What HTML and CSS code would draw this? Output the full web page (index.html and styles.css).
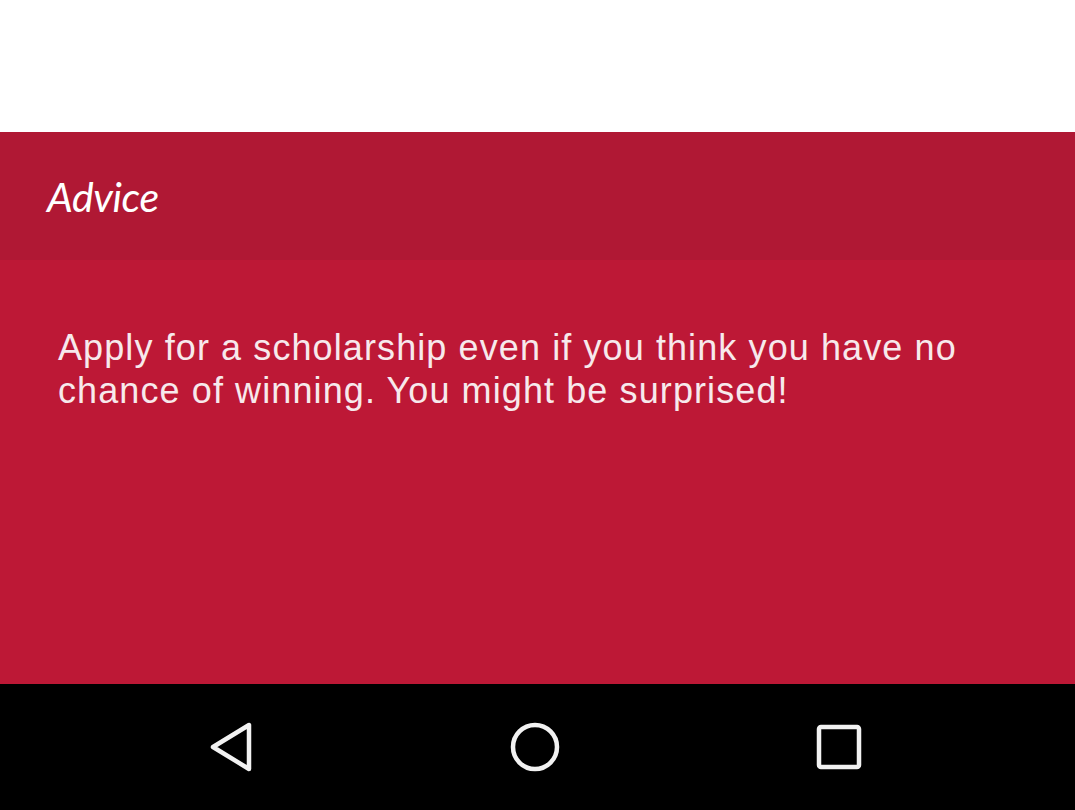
FILE: index.html
```html
<!DOCTYPE html>
<html>
<head>
<meta charset="utf-8">
<link rel="stylesheet" href="styles.css">
</head>
<body>
<div class="screen">
  <div class="top"></div>
  <header class="bar"><h1 class="title">Advice</h1></header>
  <main class="content">
    <p class="advice">Apply for a scholarship even if you think you have no chance of winning. You might be surprised!</p>
  </main>
  <nav class="nav">
    <svg class="ico" width="56" height="56" viewBox="0 0 56 56"><path d="M46 6 L46 50 L10 28 Z" fill="none" stroke="#f2f2f2" stroke-width="4.5" stroke-linejoin="round"/></svg>
    <svg class="ico" width="56" height="56" viewBox="0 0 56 56"><circle cx="28" cy="28" r="22" fill="none" stroke="#f2f2f2" stroke-width="4.5"/></svg>
    <svg class="ico" width="56" height="56" viewBox="0 0 56 56"><rect x="8" y="8" width="40" height="40" rx="2" fill="none" stroke="#f2f2f2" stroke-width="4.5"/></svg>
  </nav>
</div>
</body>
</html>
```
FILE: styles.css
```css
html, body { margin: 0; padding: 0; }
body { width: 1075px; height: 810px; overflow: hidden; background: #fff; }
.screen { display: flex; flex-direction: column; height: 810px; }
.top { height: 132px; background: #fff; flex: none; }
.bar { height: 128px; background: #b01834; flex: none; display: flex; align-items: center; padding-left: 47px; box-sizing: border-box; }
.title { margin: 0; font-family: "Lato", sans-serif; font-style: italic; font-weight: 400; font-size: 41px; color: #fff; letter-spacing: -0.4px; }
.content { flex: 1; background: #bd1836; padding: 66px 58px 0; }
.advice { margin: 0; font-family: "Liberation Sans", Arial, sans-serif; font-size: 36px; line-height: 43px; color: #f7e9ec; font-weight: 400; letter-spacing: 1.1px; }
.nav { height: 126px; flex: none; background: #000; display: flex; align-items: center; justify-content: center; gap: 248px; padding-right: 5px; box-sizing: border-box; }
.ico { display: block; }
```
